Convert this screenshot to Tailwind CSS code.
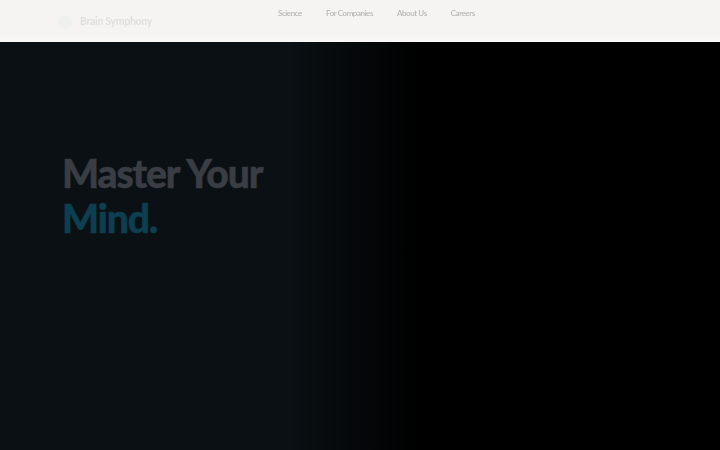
<!doctype html>
<html lang="en">
<head>
  <meta charset="utf-8">
  <meta name="viewport" content="width=device-width,initial-scale=1">
  <title>Brain Symphony</title>
  <script src="https://cdn.jsdelivr.net/npm/@tailwindcss/browser@4"></script>
</head>
<body class="h-[450px] overflow-hidden bg-black font-['Lato',sans-serif]">
  <!-- nav -->
  <header class="h-[42px] bg-linear-to-b from-[#f5f4f2] from-80% to-[#faf8f8] flex items-start relative">
    <a class="absolute left-[57px] top-[14px] flex items-center gap-[7px] blur-[0.6px]">
      <svg class="w-[16px] h-[16px] opacity-[0.06]" viewBox="0 0 18 18"><circle cx="9" cy="9" r="8" fill="#9fc3d0"/></svg>
      <span class="text-[10.5px] leading-[14px] font-bold tracking-[-0.3px] text-[#e0dfdd] -mt-[2px]">Brain Symphony</span>
    </a>
    <nav class="ml-[278px] mt-[7px] flex gap-[24px] text-[8px] tracking-[-0.42px] font-medium text-[#b3b2b1] leading-[12px] blur-[0.3px]">
      <a>Science</a>
      <a>For Companies</a>
      <a>About Us</a>
      <a>Careers</a>
    </nav>
  </header>

  <!-- hero -->
  <main class="h-[408px] bg-linear-to-r/srgb from-[#0a1014] from-40% to-black to-[58%] pl-[62px] pt-[109px]">
    <h1 class="text-[39px] leading-[45px] font-black tracking-[-1.1px] [word-spacing:1px] [-webkit-text-stroke:0.5px_currentColor]">
      <span class="block text-[#3a3d43]">Master Your</span>
      <span class="block text-[#0d3f50]">Mind.</span>
    </h1>
  </main>
</body>
</html>
